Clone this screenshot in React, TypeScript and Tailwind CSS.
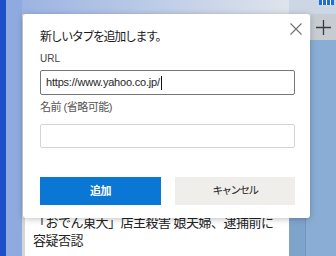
import React from 'react';

const font = "font-['Liberation_Sans','Noto_Sans_CJK_JP',sans-serif]";

function CloseIcon() {
  return (
    <svg width="12" height="12" viewBox="0 0 12 12" fill="none">
      <path d="M0.5 0.5 L11.5 11.5 M11.5 0.5 L0.5 11.5" stroke="#707070" strokeWidth="1.1" />
    </svg>
  );
}

function PlusIcon() {
  return (
    <svg width="15" height="15" viewBox="0 0 15 15" fill="none">
      <path d="M7.5 0 V15 M0 7.5 H15" stroke="#3c3c3c" strokeWidth="1.3" />
    </svg>
  );
}

function AddTabDialog() {
  return (
    <div className="absolute left-[23px] top-[14px] w-[287px] h-[204px] bg-white rounded-[3px] shadow-[0_1px_6px_rgba(0,0,0,0.25)] pt-[15px] pl-[17px] pr-[15px]">
      <button className="absolute right-[8px] top-[9px] w-[12px] h-[12px] flex items-center justify-center">
        <CloseIcon />
      </button>
      <div className="text-[12px] leading-[16px] tracking-[-1.4px] text-[#1a1a1a]">新しいタブを追加します。</div>
      <div className="mt-[7px] text-[10px] leading-[14px] text-[#444]">URL</div>
      <div className="mt-[4px] h-[25px] border-[1.5px] border-[#767676] rounded-[2px] flex items-center pl-[5px] text-[11px] tracking-[-0.2px] text-[#262626]">
        <span>https://www.yahoo.co.jp/</span>
        <span className="w-[1px] h-[14px] bg-[#111] ml-[1px]" />
      </div>
      <div className="mt-[4px] text-[11px] leading-[16px] tracking-[-0.5px] text-[#555]">名前 (省略可能)</div>
      <div className="mt-[9px] h-[24px] border border-[#d4d4d4] rounded-[2px]" />
      <div className="mt-[29px] flex gap-[14px]">
        <button className="w-[121px] h-[28px] bg-[#0b77d4] text-white text-[11px] font-semibold tracking-[-0.5px] flex items-center justify-center">
          追加
        </button>
        <button className="w-[120px] h-[28px] bg-[#efeeeb] text-[#222] text-[10.5px] tracking-[-1.5px] flex items-center justify-center">
          キャンセル
        </button>
      </div>
    </div>
  );
}

export default function App() {
  return (
    <div className={`relative w-[336px] h-[256px] overflow-hidden flex bg-[#8eaadf] ${font}`}>
      <div className="w-[6px] bg-[#1d4fc6]" />
      <div className="w-[16px]" />
      <div className="w-[267px] flex flex-col">
        <div className="h-[14px] bg-gradient-to-r from-[#9cb4e2] to-[#dfe4ec]" />
        <div className="flex-1 bg-white border-l-[3px] border-[#d6d6d6] flex flex-col justify-end pb-[6px] pl-[8px] text-[13px] leading-[18px] tracking-[-0.5px] text-[#222]">
          <div className="whitespace-nowrap">「おでん東大」店主殺害 娘夫婦、逮捕前に</div>
          <div>容疑否認</div>
        </div>
      </div>
      <div className="w-[47px] flex flex-col">
        <div className="h-[14px] bg-[#cdd6e3] flex justify-end pr-[2px]">
          <div className="w-[15px] h-[5px] bg-[#1f6fd4] flex justify-around px-[2px]">
            <div className="w-[1px] bg-white" />
            <div className="w-[1px] bg-white" />
            <div className="w-[1px] bg-white" />
          </div>
        </div>
        <div className="h-[26px] flex">
          <div className="w-[22px] bg-[#d3dae4]" />
          <div className="flex-1 bg-[#c7ccd3] flex items-center justify-center">
            <PlusIcon />
          </div>
        </div>
        <div className="flex-1 flex">
          <div className="w-[17px] bg-[#7fa4cc] border-r border-[#7396bf]" />
          <div className="flex-1 bg-[#8aadd5]" />
        </div>
      </div>
      <AddTabDialog />
    </div>
  );
}
